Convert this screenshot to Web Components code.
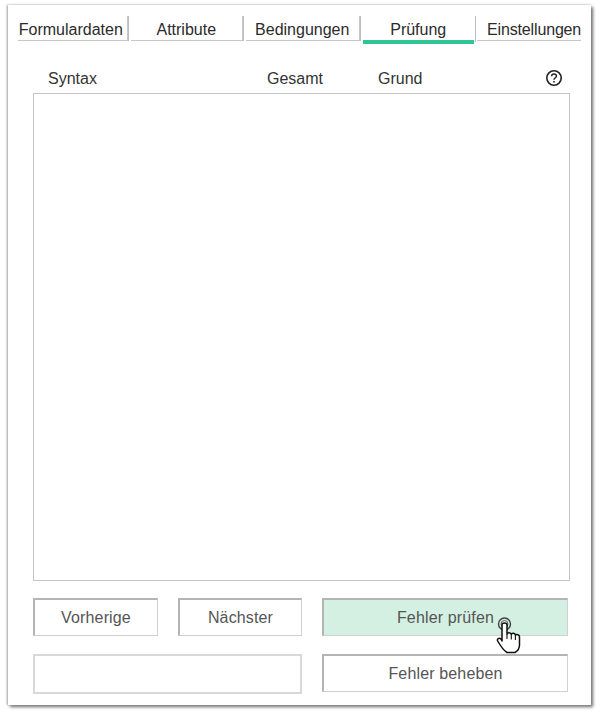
<!DOCTYPE html>
<html lang="de">
<head>
<meta charset="utf-8">
<title>Prüfung</title>
<style>
  html, body { margin: 0; background: #fff; }
  body { box-sizing: border-box; width: 600px; height: 716px; padding-top: 5px; font: 16px "Liberation Sans", Arial, sans-serif; color: #333; overflow: hidden; }
</style>
</head>
<body>
<form-panel>
  <tab-bar slot="tabs">
    <tab-item style="--w:110px;--shift:3px">Formulardaten</tab-item>
    <tab-item style="--w:113px">Attribute</tab-item>
    <tab-item style="--w:114px">Bedingungen</tab-item>
    <tab-item style="--w:112px" active>Prüfung</tab-item>
    <tab-item style="--w:104px;--shift-left:10px;--spacing:-.15px">Einstellungen</tab-item>
  </tab-bar>
  <list-header slot="header"></list-header>
  <action-button slot="prev" raised>Vorherige</action-button>
  <action-button slot="next" raised>Nächster</action-button>
  <action-button slot="check" raised hover>Fehler prüfen<hand-cursor></hand-cursor></action-button>
  <action-button slot="blank" tall></action-button>
  <action-button slot="fix" raised short>Fehler beheben</action-button>
</form-panel>

<script>
class FormPanel extends HTMLElement {
  constructor() {
    super();
    const shadow = this.attachShadow({mode: 'open'});
    shadow.innerHTML = `<style>
      :host{display:block;box-sizing:border-box;width:583px;height:700px;margin-left:8px;padding:11px 10px 0 10px;background:#fff;box-shadow:-1px 0 2px #a0a0a0,2px 2px 3px #6e6e6e;}
      .list{box-sizing:border-box;width:537px;height:488px;margin-left:15px;border:1px solid #c4c4c4;}
      .actions{display:grid;grid-template-columns:125px 124px 246px;column-gap:20px;grid-template-rows:38px 40px;row-gap:18px;margin:17px 0 0 15px;}
      .blank{grid-column:1 / 3;}
    </style>
    <slot name="tabs"></slot>
    <slot name="header"></slot>
    <div class="list"></div>
    <div class="actions">
      <slot name="prev"></slot>
      <slot name="next"></slot>
      <slot name="check"></slot>
      <div class="blank"><slot name="blank"></slot></div>
      <slot name="fix"></slot>
    </div>`;
  }
}

class TabBar extends HTMLElement {
  constructor() {
    super();
    const shadow = this.attachShadow({mode: 'open'});
    shadow.innerHTML = `<style>:host{display:flex;gap:3px;height:25px;}</style><slot></slot>`;
  }
}

class TabItem extends HTMLElement {
  constructor() {
    super();
    const shadow = this.attachShadow({mode: 'open'});
    shadow.innerHTML = `<style>
      :host{display:block;position:relative;box-sizing:border-box;width:var(--w);height:25px;line-height:28px;padding:0 var(--shift,0) 0 var(--shift-left,0);letter-spacing:var(--spacing,0);text-align:center;white-space:nowrap;color:#2b2b2b;border-bottom:1px solid #c8c8c8;}
      :host(:not(:last-child))::after{content:"";position:absolute;right:-2px;top:0;bottom:-1px;width:1px;background:#bdbdbd;}
      :host(:not(:last-child)){border-right:1px solid #c8c8c8;}
      :host([active]){border-right:0;border-bottom:0;}
      :host([active])::before{content:"";position:absolute;left:0;right:0;top:24px;height:4px;background:#2ec494;}
      :host([active])::after{right:-2px;}
    </style><slot></slot>`;
  }
}

class ListHeader extends HTMLElement {
  constructor() {
    super();
    const shadow = this.attachShadow({mode: 'open'});
    shadow.innerHTML = `<style>
      :host{display:grid;box-sizing:border-box;grid-template-columns:219px 111px 1fr 18px;align-items:center;height:52px;margin-left:30px;padding:23px 18px 0 0;color:#333;}
      svg{display:block;margin-top:-2px;}
    </style>
    <span>Syntax</span><span>Gesamt</span><span>Grund</span>
    <svg width="18" height="18" viewBox="0 0 18 18" fill="none" stroke="#222">
      <circle cx="9" cy="9" r="7.2" stroke-width="1.6"/>
      <path d="M6.6 7.2c0-1.400 1.100-2.200 2.400-2.200s2.400.8 2.400 2.100c0 1.900-2.400 1.900-2.400 3.600" stroke-width="1.500"/>
      <path d="M9 12v1.600" stroke-width="1.600"/>
    </svg>`;
  }
}

class ActionButton extends HTMLElement {
  constructor() {
    super();
    const shadow = this.attachShadow({mode: 'open'});
    shadow.innerHTML = `<style>
      :host{display:flex;position:relative;box-sizing:border-box;height:100%;align-items:center;justify-content:center;letter-spacing:.15px;color:#555;border:1px solid #d0d0d0;background:#fff;}
      :host([raised]){border-width:2px 1px 1px 2px;border-color:#b4b4b4 #d0d0d0 #d0d0d0 #b4b4b4;}
      :host([hover]){background:#d4f0e2;}
      :host([tall]){border-width:2px;border-color:#d8d8d8;}
      :host([short]){height:38px;}
    </style><slot></slot>`;
  }
}

class HandCursor extends HTMLElement {
  constructor() {
    super();
    const shadow = this.attachShadow({mode: 'open'});
    shadow.innerHTML = `<style>
      :host{position:absolute;left:171px;top:15px;width:30px;height:42px;}
      svg{display:block;}
    </style>
    <svg width="30" height="42" viewBox="0 0 30 42">
      <circle cx="9.500" cy="9" r="6" fill="none" stroke="#444" stroke-width="1.400"/>
      <circle cx="9.500" cy="9" r="3.500" fill="none" stroke="#666" stroke-width="1"/>
      <path d="M7 10c0-2.800 5-2.800 5 0v9c.6-1.800 4-1.800 4.300.4 .7-1.700 3.900-1.400 4.100.8 1-1.200 4.100-.7 4.100 1.600v8.200c0 3.500-2 6-4.500 7.500h-8c-2.500-1.500-7.300-8-9.300-11.500-1-2 1.500-3.500 3.200-2l1.100 2z" fill="#fff" stroke="#111" stroke-width="1.500" stroke-linejoin="round"/>
      <path d="M12 19v5M16.300 19.500v5M20.400 20.500v4.500" fill="none" stroke="#111" stroke-width="1.100"/>
    </svg>`;
  }
}

customElements.define('form-panel', FormPanel);
customElements.define('tab-bar', TabBar);
customElements.define('tab-item', TabItem);
customElements.define('list-header', ListHeader);
customElements.define('action-button', ActionButton);
customElements.define('hand-cursor', HandCursor);
</script>
</body>
</html>
